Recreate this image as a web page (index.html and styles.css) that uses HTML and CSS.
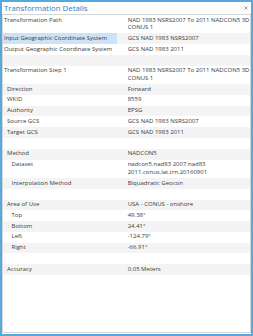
FILE: index.html
```html
<!DOCTYPE html>
<html lang="en">
<head>
  <meta charset="UTF-8" />
  <title>Transformation Details</title>
  <link rel="stylesheet" href="styles.css">
</head>
<body>
  <div class="dialog">
    <div class="titlebar">
      <span class="title">Transformation Details</span>
      <svg class="close" width="4" height="4" viewBox="0 0 4 4">
        <path d="M0.5 0.5 L3.5 3.5 M3.5 0.5 L0.5 3.5" stroke="#777" stroke-width="0.7" />
      </svg>
    </div>

    <div class="panel">
      <div class="row">
        <div class="key">Transformation Path</div>
        <div class="val">NAD 1983 NSRS2007 To 2011 NADCON5 3D<br>CONUS 1</div>
      </div>
      <div class="row alt">
        <div class="key selected">Input Geographic Coordinate System</div>
        <div class="val">GCS NAD 1983 NSRS2007</div>
      </div>
      <div class="row">
        <div class="key">Output Geographic Coordinate System</div>
        <div class="val">GCS NAD 1983 2011</div>
      </div>
      <div class="row alt blank"><div class="key"></div><div class="val"></div></div>

      <div class="row">
        <div class="key">Transformation Step 1</div>
        <div class="val">NAD 1983 NSRS2007 To 2011 NADCON5 3D<br>CONUS 1</div>
      </div>
      <div class="row alt">
        <div class="key sub">Direction</div>
        <div class="val">Forward</div>
      </div>
      <div class="row">
        <div class="key sub">WKID</div>
        <div class="val">8559</div>
      </div>
      <div class="row alt">
        <div class="key sub">Authority</div>
        <div class="val">EPSG</div>
      </div>
      <div class="row">
        <div class="key sub">Source GCS</div>
        <div class="val">GCS NAD 1983 NSRS2007</div>
      </div>
      <div class="row alt">
        <div class="key sub">Target GCS</div>
        <div class="val">GCS NAD 1983 2011</div>
      </div>
      <div class="row blank"><div class="key"></div><div class="val"></div></div>

      <div class="row alt">
        <div class="key sub">Method</div>
        <div class="val">NADCON5</div>
      </div>
      <div class="row">
        <div class="key subsub">Dataset</div>
        <div class="val">nadcon5.nad83 2007.nad83<br>2011.conus.lat.trn.20160901</div>
      </div>
      <div class="row alt">
        <div class="key subsub">Interpolation Method</div>
        <div class="val">Biquadratic Geocon</div>
      </div>
      <div class="row blank"><div class="key"></div><div class="val"></div></div>

      <div class="row alt">
        <div class="key sub">Area of Use</div>
        <div class="val">USA - CONUS - onshore</div>
      </div>
      <div class="row">
        <div class="key subsub">Top</div>
        <div class="val">49.38°</div>
      </div>
      <div class="row alt">
        <div class="key subsub">Bottom</div>
        <div class="val">24.41°</div>
      </div>
      <div class="row">
        <div class="key subsub">Left</div>
        <div class="val">-124.79°</div>
      </div>
      <div class="row alt">
        <div class="key subsub">Right</div>
        <div class="val">-66.91°</div>
      </div>
      <div class="row blank"><div class="key"></div><div class="val"></div></div>

      <div class="row alt">
        <div class="key sub">Accuracy</div>
        <div class="val">0.05 Meters</div>
      </div>
    </div>
  </div>
</body>
</html>
```

FILE: styles.css
```css
body {
  margin: 0;
  padding: 0;
  background: #fff;
  font-family: 'Open Sans', 'Liberation Sans', sans-serif;
}

.dialog {
  width: 253px;
  height: 336px;
  box-sizing: border-box;
  border: 2px solid #56a9de;
  background: #fff;
  display: flex;
  flex-direction: column;
}

.titlebar {
  height: 12px;
  display: flex;
  align-items: center;
  justify-content: space-between;
  padding: 0 2px 0 2px;
}

.title {
  font-size: 7.8px;
  color: #2d7bbf;
  line-height: 10px;
}

.close {
  margin-right: 1px;
}

.panel {
  flex: 1;
  border: 1px solid #d6d6d6;
  margin-bottom: 1px;
  font-size: 6px;
  line-height: 7.6px;
  color: #3a3a3a;
}

.row {
  display: grid;
  grid-template-columns: 114px 1fr;
}

.row > div {
  padding: 1.6px 0;
  white-space: nowrap;
}

.row.blank > div {
  height: 7.6px;
}

.alt {
  background: #f4f4f4;
}

.key {
  padding-left: 1px !important;
}

.key.sub {
  padding-left: 4px !important;
}

.key.subsub {
  padding-left: 8.5px !important;
}

.key.selected {
  background: #cde3f5;
}

.val {
  padding-left: 10.7px !important;
}
```
